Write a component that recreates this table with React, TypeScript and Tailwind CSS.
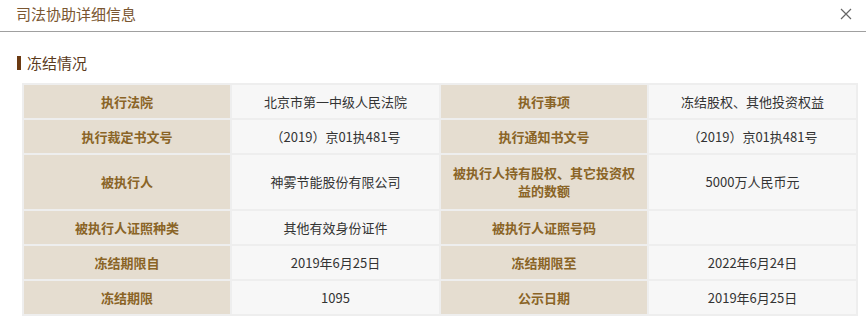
export default function App() {
  const rows: [string, string, string, string][] = [
    ["执行法院", "北京市第一中级人民法院", "执行事项", "冻结股权、其他投资权益"],
    ["执行裁定书文号", "（2019）京01执481号", "执行通知书文号", "（2019）京01执481号"],
    ["被执行人", "神雾节能股份有限公司", "被执行人持有股权、其它投资权益的数额", "5000万人民币元"],
    ["被执行人证照种类", "其他有效身份证件", "被执行人证照号码", ""],
    ["冻结期限自", "2019年6月25日", "冻结期限至", "2022年6月24日"],
    ["冻结期限", "1095", "公示日期", "2019年6月25日"],
  ];

  return (
    <div
      className="w-[866px] h-[319px] bg-white overflow-hidden"
      style={{ fontFamily: '"Noto Sans CJK SC", "Noto Sans", sans-serif' }}
    >
      <div className="h-[32px] border-b border-[#a0a0a0] flex items-center justify-between pl-[16px] pr-[14px] pb-[3px]">
        <span className="text-[15px] text-[#7a5631]">司法协助详细信息</span>
        <svg width="12" height="12" viewBox="0 0 12 12" className="text-[#666]">
          <path d="M1 1L11 11M11 1L1 11" stroke="currentColor" strokeWidth="1.2" fill="none" />
        </svg>
      </div>

      <div className="mt-[21px] h-[20px] flex items-center pl-[17px]">
        <span className="w-[4px] h-[14px] bg-[#6b3a12] mr-[6px]"></span>
        <span className="text-[15px] text-[#5a3a1c]">冻结情况</span>
      </div>

      <table className="mt-[10px] ml-[22px] border-collapse table-fixed w-[834px] text-[13px]">
        <colgroup>
          <col className="w-[208px]" />
          <col className="w-[209px]" />
          <col className="w-[208px]" />
          <col className="w-[209px]" />
        </colgroup>
        <tbody>
          {rows.map((r, i) => (
            <tr key={i} className={i === 2 ? "h-[56px]" : "h-[35px]"}>
              <td className="border-2 border-[#eeeeee] bg-[#e5ddd0] text-[#8a6426] font-bold text-center leading-[18px]">
                {r[0]}
              </td>
              <td className="border-2 border-[#eeeeee] bg-[#f7f7f7] text-[#333] text-center">{r[1]}</td>
              <td className="border-2 border-[#eeeeee] bg-[#e5ddd0] text-[#8a6426] font-bold text-center leading-[18px] px-[10px]">
                {r[2]}
              </td>
              <td className="border-2 border-[#eeeeee] bg-[#f7f7f7] text-[#333] text-center">{r[3]}</td>
            </tr>
          ))}
        </tbody>
      </table>
    </div>
  );
}
